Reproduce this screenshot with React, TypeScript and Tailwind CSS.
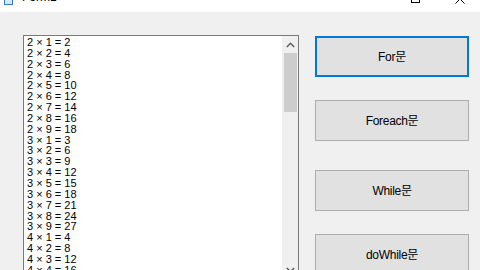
import React from "react";

const lines: string[] = [];
for (let a = 2; a <= 9; a++) {
  for (let b = 1; b <= 9; b++) {
    lines.push(`${a} × ${b} = ${a * b}`);
  }
}

function Btn({ label, focused, className }: { label: string; focused?: boolean; className?: string }) {
  return (
    <div
      className={
        "w-[154px] h-[41px] flex items-center justify-center bg-[#e1e1e1] text-[12px] tracking-[-0.3px] text-black " +
        (focused ? "border-2 border-[#0078d7] " : "border border-[#adadad] ") +
        (className ?? "")
      }
      style={{ fontFamily: '"Liberation Sans", "Noto Sans CJK KR", sans-serif' }}
    >
      {label}
    </div>
  );
}

export default function App() {
  return (
    <div className="w-[480px] h-[270px] overflow-hidden bg-[#f0f0f0] flex flex-col">
      <div className="h-[12px] shrink-0 bg-white overflow-hidden flex items-start">
        <div className="ml-[4px] -mt-[4px] w-[9px] h-[9px] border border-[#3c78c8] bg-[#d8e6f7] flex flex-col">
          <div className="h-[2px] bg-[#3c78c8]" />
        </div>
        <div
          className="ml-[9px] -mt-[9px] text-[12px] leading-[12px] text-black"
          style={{ fontFamily: '"Liberation Sans", sans-serif' }}
        >
          Form1
        </div>
        <div className="ml-auto flex items-start">
          <div className="w-[8px] h-[1px] bg-transparent mr-[35px]" />
          <div className="-mt-[6px] w-[9px] h-[9px] border border-black mr-[35px]" />
          <svg width="10" height="10" viewBox="0 0 10 10" className="-mt-[6px] mr-[15px]">
            <path d="M0.5 0.5 L9.5 9.5 M9.5 0.5 L0.5 9.5" stroke="black" strokeWidth="1" />
          </svg>
        </div>
      </div>
      <div className="flex pl-[23px] pt-[23px]">
        <div className="w-[276px] h-[260px] shrink-0 border border-[#7a7a7a] bg-white flex">
          <div
            className="flex-1 pl-[3px] pt-[1px] text-[11px] leading-[10.85px] text-black overflow-hidden"
            style={{ fontFamily: '"Liberation Sans", sans-serif' }}
          >
            {lines.slice(0, 24).map((l) => (
              <div key={l} className="whitespace-pre">{l}</div>
            ))}
          </div>
          <div className="w-[16px] bg-[#f0f0f0] flex flex-col items-center">
            <div className="h-[17px] w-full flex items-center justify-center">
              <svg width="9" height="6" viewBox="0 0 9 6">
                <path d="M0.8 5 L4.5 1.3 L8.2 5" stroke="#606060" strokeWidth="1.6" fill="none" />
              </svg>
            </div>
            <div className="w-[13px] h-[59px] bg-[#cdcdcd]" />
            <div className="flex-1" />
            <div className="h-[17px] w-full flex items-center justify-center mb-[16px]">
              <svg width="9" height="6" viewBox="0 0 9 6">
                <path d="M0.8 1 L4.5 4.7 L8.2 1" stroke="#606060" strokeWidth="1.6" fill="none" />
              </svg>
            </div>
          </div>
        </div>
        <div className="ml-[16px] pt-[1px] flex flex-col">
          <Btn label="For문" focused />
          <Btn label="Foreach문" className="mt-[23px]" />
          <Btn label="While문" className="mt-[29px]" />
          <Btn label="doWhile문" className="mt-[23px]" />
        </div>
      </div>
    </div>
  );
}
